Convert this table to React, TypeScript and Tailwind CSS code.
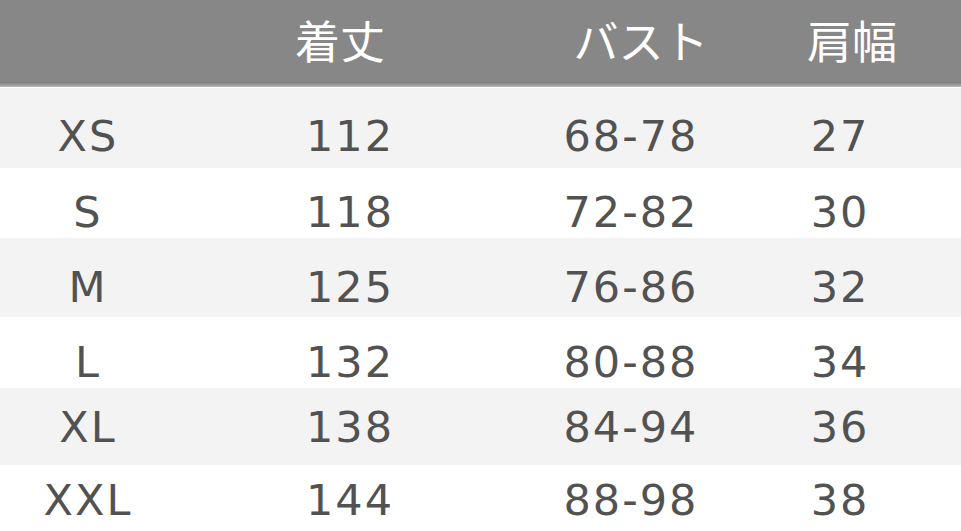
const rows = [
  { size: 'XS', length: '112', bust: '68-78', shoulder: '27', bg: 'bg-[#f3f3f3]', h: 'h-[80px]', pt: 'pt-[16px]' },
  { size: 'S', length: '118', bust: '72-82', shoulder: '30', bg: 'bg-white', h: 'h-[70px]', pt: 'pt-[18px]' },
  { size: 'M', length: '125', bust: '76-86', shoulder: '32', bg: 'bg-[#f3f3f3]', h: 'h-[79px]', pt: 'pt-[20px]' },
  { size: 'L', length: '132', bust: '80-88', shoulder: '34', bg: 'bg-white', h: 'h-[71px]', pt: 'pt-[20px]' },
  { size: 'XL', length: '138', bust: '84-94', shoulder: '36', bg: 'bg-[#f3f3f3]', h: 'h-[77px]', pt: 'pt-[2px]' },
  { size: 'XXL', length: '144', bust: '88-98', shoulder: '38', bg: 'bg-white', h: 'h-[66px]', pt: 'pt-[4px]' },
]

const cols = 'grid grid-cols-[176px_348px_214px_204px]'

export default function App() {
  return (
    <div className="w-[961px] h-[531px] overflow-hidden bg-white">
      <div className="h-[82px] bg-[#878787]">
        <div
          className={`${cols} h-full items-center text-white text-[45px] leading-none`}
          style={{ fontFamily: '"Noto Sans CJK JP", "Noto Sans", sans-serif' }}
        >
          <div />
          <div className="text-center pr-[20px] pb-[4px]">着丈</div>
          <div className="text-center pl-[20px] pb-[4px]">バスト</div>
          <div className="text-center pl-[24px] pb-[4px]">肩幅</div>
        </div>
      </div>
      <div className="h-[5px] bg-gradient-to-b from-[#7a7a7a] to-[#b8b8b8]" />
      <div className="h-[1px] bg-white" />
      {rows.map((r) => (
        <div
          key={r.size}
          className={`${cols} ${r.bg} ${r.h} ${r.pt} items-center text-[#525252] text-[43px] leading-none tracking-[2px]`}
          style={{ fontFamily: '"DejaVu Sans", Verdana, sans-serif' }}
        >
          <div className="text-center">{r.size}</div>
          <div className="text-center">{r.length}</div>
          <div className="text-center">{r.bust}</div>
          <div className="text-center">{r.shoulder}</div>
        </div>
      ))}
    </div>
  )
}
